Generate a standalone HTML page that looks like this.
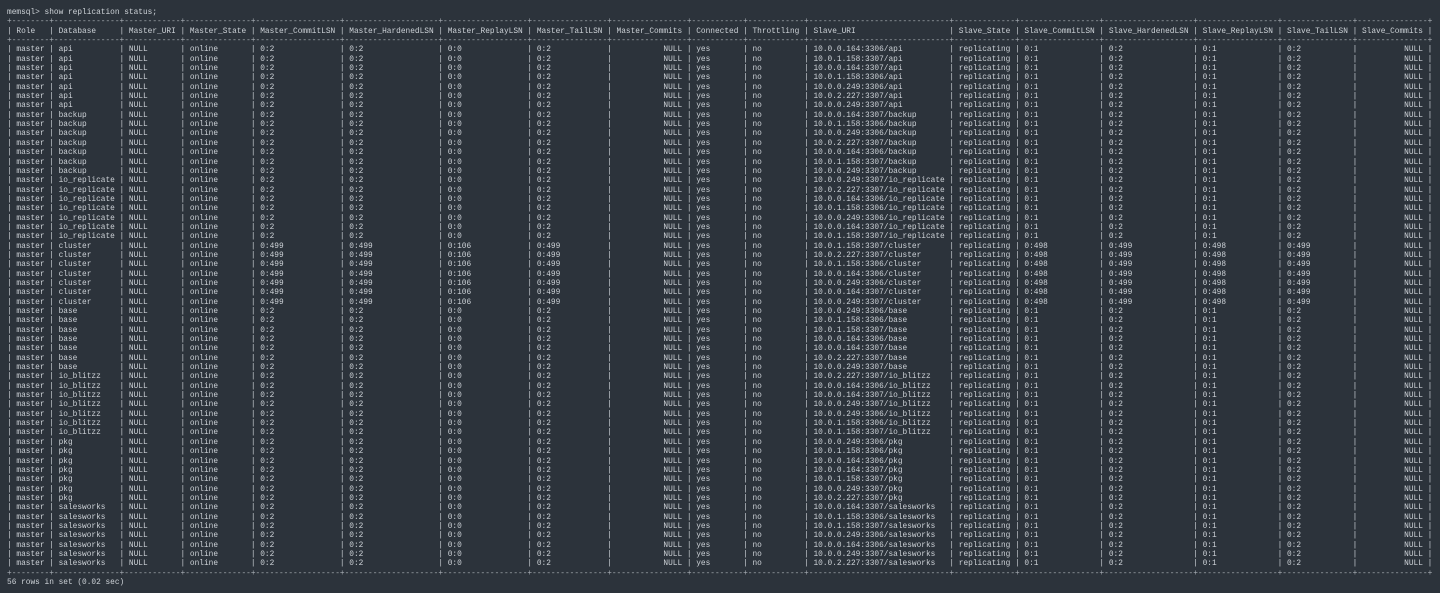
<!DOCTYPE html>
<html><head><meta charset="utf-8"><style>
html,body{margin:0;padding:0;background:#2c333b;width:1440px;height:593px;overflow:hidden}
#t{position:absolute;left:7px;top:8px;font-family:"Liberation Mono",monospace;font-size:7.82px;line-height:9.35px;color:#cdd2d7;white-space:normal}
p{margin:0;height:9.35px;white-space:pre;overflow:hidden}
p i{font-style:normal;display:inline-block;overflow:hidden;white-space:pre;vertical-align:top;box-sizing:border-box;padding:0 1ch;height:9.35px}
p.b i{padding:0;color:#aab0b6}
p.b{color:#aab0b6}
p i:nth-of-type(1){width:8ch}p i:nth-of-type(2){width:14ch}p i:nth-of-type(3){width:12ch}p i:nth-of-type(4){width:14ch}
p i:nth-of-type(5){width:18ch}p i:nth-of-type(6){width:20ch}p i:nth-of-type(7){width:18ch}p i:nth-of-type(8){width:16ch}
p i:nth-of-type(9){width:16ch;text-align:right}p i:nth-of-type(10){width:11ch}p i:nth-of-type(11){width:12ch}p i:nth-of-type(12){width:30ch}
p i:nth-of-type(13){width:13ch}p i:nth-of-type(14){width:17ch}p i:nth-of-type(15){width:19ch}p i:nth-of-type(16){width:17ch}
p i:nth-of-type(17){width:15ch}p i:nth-of-type(18){width:15ch;text-align:right}
p.h i:nth-of-type(9),p.h i:nth-of-type(18){text-align:left}
</style></head><body><div id="t">
<p>memsql&gt; show replication status;</p>
<p class="b">+<i>------------------------------</i>+<i>------------------------------</i>+<i>------------------------------</i>+<i>------------------------------</i>+<i>------------------------------</i>+<i>------------------------------</i>+<i>------------------------------</i>+<i>------------------------------</i>+<i>------------------------------</i>+<i>------------------------------</i>+<i>------------------------------</i>+<i>------------------------------</i>+<i>------------------------------</i>+<i>------------------------------</i>+<i>------------------------------</i>+<i>------------------------------</i>+<i>------------------------------</i>+<i>------------------------------</i>+</p>
<p class="h">|<i>Role</i>|<i>Database</i>|<i>Master_URI</i>|<i>Master_State</i>|<i>Master_CommitLSN</i>|<i>Master_HardenedLSN</i>|<i>Master_ReplayLSN</i>|<i>Master_TailLSN</i>|<i>Master_Commits</i>|<i>Connected</i>|<i>Throttling</i>|<i>Slave_URI</i>|<i>Slave_State</i>|<i>Slave_CommitLSN</i>|<i>Slave_HardenedLSN</i>|<i>Slave_ReplayLSN</i>|<i>Slave_TailLSN</i>|<i>Slave_Commits</i>|</p>
<p class="b">+<i>------------------------------</i>+<i>------------------------------</i>+<i>------------------------------</i>+<i>------------------------------</i>+<i>------------------------------</i>+<i>------------------------------</i>+<i>------------------------------</i>+<i>------------------------------</i>+<i>------------------------------</i>+<i>------------------------------</i>+<i>------------------------------</i>+<i>------------------------------</i>+<i>------------------------------</i>+<i>------------------------------</i>+<i>------------------------------</i>+<i>------------------------------</i>+<i>------------------------------</i>+<i>------------------------------</i>+</p>
<p>|<i>master</i>|<i>api</i>|<i>NULL</i>|<i>online</i>|<i>0:2</i>|<i>0:2</i>|<i>0:0</i>|<i>0:2</i>|<i>NULL</i>|<i>yes</i>|<i>no</i>|<i>10.0.0.164:3306/api</i>|<i>replicating</i>|<i>0:1</i>|<i>0:2</i>|<i>0:1</i>|<i>0:2</i>|<i>NULL</i>|</p>
<p>|<i>master</i>|<i>api</i>|<i>NULL</i>|<i>online</i>|<i>0:2</i>|<i>0:2</i>|<i>0:0</i>|<i>0:2</i>|<i>NULL</i>|<i>yes</i>|<i>no</i>|<i>10.0.1.158:3307/api</i>|<i>replicating</i>|<i>0:1</i>|<i>0:2</i>|<i>0:1</i>|<i>0:2</i>|<i>NULL</i>|</p>
<p>|<i>master</i>|<i>api</i>|<i>NULL</i>|<i>online</i>|<i>0:2</i>|<i>0:2</i>|<i>0:0</i>|<i>0:2</i>|<i>NULL</i>|<i>yes</i>|<i>no</i>|<i>10.0.0.164:3307/api</i>|<i>replicating</i>|<i>0:1</i>|<i>0:2</i>|<i>0:1</i>|<i>0:2</i>|<i>NULL</i>|</p>
<p>|<i>master</i>|<i>api</i>|<i>NULL</i>|<i>online</i>|<i>0:2</i>|<i>0:2</i>|<i>0:0</i>|<i>0:2</i>|<i>NULL</i>|<i>yes</i>|<i>no</i>|<i>10.0.1.158:3306/api</i>|<i>replicating</i>|<i>0:1</i>|<i>0:2</i>|<i>0:1</i>|<i>0:2</i>|<i>NULL</i>|</p>
<p>|<i>master</i>|<i>api</i>|<i>NULL</i>|<i>online</i>|<i>0:2</i>|<i>0:2</i>|<i>0:0</i>|<i>0:2</i>|<i>NULL</i>|<i>yes</i>|<i>no</i>|<i>10.0.0.249:3306/api</i>|<i>replicating</i>|<i>0:1</i>|<i>0:2</i>|<i>0:1</i>|<i>0:2</i>|<i>NULL</i>|</p>
<p>|<i>master</i>|<i>api</i>|<i>NULL</i>|<i>online</i>|<i>0:2</i>|<i>0:2</i>|<i>0:0</i>|<i>0:2</i>|<i>NULL</i>|<i>yes</i>|<i>no</i>|<i>10.0.2.227:3307/api</i>|<i>replicating</i>|<i>0:1</i>|<i>0:2</i>|<i>0:1</i>|<i>0:2</i>|<i>NULL</i>|</p>
<p>|<i>master</i>|<i>api</i>|<i>NULL</i>|<i>online</i>|<i>0:2</i>|<i>0:2</i>|<i>0:0</i>|<i>0:2</i>|<i>NULL</i>|<i>yes</i>|<i>no</i>|<i>10.0.0.249:3307/api</i>|<i>replicating</i>|<i>0:1</i>|<i>0:2</i>|<i>0:1</i>|<i>0:2</i>|<i>NULL</i>|</p>
<p>|<i>master</i>|<i>backup</i>|<i>NULL</i>|<i>online</i>|<i>0:2</i>|<i>0:2</i>|<i>0:0</i>|<i>0:2</i>|<i>NULL</i>|<i>yes</i>|<i>no</i>|<i>10.0.0.164:3307/backup</i>|<i>replicating</i>|<i>0:1</i>|<i>0:2</i>|<i>0:1</i>|<i>0:2</i>|<i>NULL</i>|</p>
<p>|<i>master</i>|<i>backup</i>|<i>NULL</i>|<i>online</i>|<i>0:2</i>|<i>0:2</i>|<i>0:0</i>|<i>0:2</i>|<i>NULL</i>|<i>yes</i>|<i>no</i>|<i>10.0.1.158:3306/backup</i>|<i>replicating</i>|<i>0:1</i>|<i>0:2</i>|<i>0:1</i>|<i>0:2</i>|<i>NULL</i>|</p>
<p>|<i>master</i>|<i>backup</i>|<i>NULL</i>|<i>online</i>|<i>0:2</i>|<i>0:2</i>|<i>0:0</i>|<i>0:2</i>|<i>NULL</i>|<i>yes</i>|<i>no</i>|<i>10.0.0.249:3306/backup</i>|<i>replicating</i>|<i>0:1</i>|<i>0:2</i>|<i>0:1</i>|<i>0:2</i>|<i>NULL</i>|</p>
<p>|<i>master</i>|<i>backup</i>|<i>NULL</i>|<i>online</i>|<i>0:2</i>|<i>0:2</i>|<i>0:0</i>|<i>0:2</i>|<i>NULL</i>|<i>yes</i>|<i>no</i>|<i>10.0.2.227:3307/backup</i>|<i>replicating</i>|<i>0:1</i>|<i>0:2</i>|<i>0:1</i>|<i>0:2</i>|<i>NULL</i>|</p>
<p>|<i>master</i>|<i>backup</i>|<i>NULL</i>|<i>online</i>|<i>0:2</i>|<i>0:2</i>|<i>0:0</i>|<i>0:2</i>|<i>NULL</i>|<i>yes</i>|<i>no</i>|<i>10.0.0.164:3306/backup</i>|<i>replicating</i>|<i>0:1</i>|<i>0:2</i>|<i>0:1</i>|<i>0:2</i>|<i>NULL</i>|</p>
<p>|<i>master</i>|<i>backup</i>|<i>NULL</i>|<i>online</i>|<i>0:2</i>|<i>0:2</i>|<i>0:0</i>|<i>0:2</i>|<i>NULL</i>|<i>yes</i>|<i>no</i>|<i>10.0.1.158:3307/backup</i>|<i>replicating</i>|<i>0:1</i>|<i>0:2</i>|<i>0:1</i>|<i>0:2</i>|<i>NULL</i>|</p>
<p>|<i>master</i>|<i>backup</i>|<i>NULL</i>|<i>online</i>|<i>0:2</i>|<i>0:2</i>|<i>0:0</i>|<i>0:2</i>|<i>NULL</i>|<i>yes</i>|<i>no</i>|<i>10.0.0.249:3307/backup</i>|<i>replicating</i>|<i>0:1</i>|<i>0:2</i>|<i>0:1</i>|<i>0:2</i>|<i>NULL</i>|</p>
<p>|<i>master</i>|<i>io_replicate</i>|<i>NULL</i>|<i>online</i>|<i>0:2</i>|<i>0:2</i>|<i>0:0</i>|<i>0:2</i>|<i>NULL</i>|<i>yes</i>|<i>no</i>|<i>10.0.0.249:3307/io_replicate</i>|<i>replicating</i>|<i>0:1</i>|<i>0:2</i>|<i>0:1</i>|<i>0:2</i>|<i>NULL</i>|</p>
<p>|<i>master</i>|<i>io_replicate</i>|<i>NULL</i>|<i>online</i>|<i>0:2</i>|<i>0:2</i>|<i>0:0</i>|<i>0:2</i>|<i>NULL</i>|<i>yes</i>|<i>no</i>|<i>10.0.2.227:3307/io_replicate</i>|<i>replicating</i>|<i>0:1</i>|<i>0:2</i>|<i>0:1</i>|<i>0:2</i>|<i>NULL</i>|</p>
<p>|<i>master</i>|<i>io_replicate</i>|<i>NULL</i>|<i>online</i>|<i>0:2</i>|<i>0:2</i>|<i>0:0</i>|<i>0:2</i>|<i>NULL</i>|<i>yes</i>|<i>no</i>|<i>10.0.0.164:3306/io_replicate</i>|<i>replicating</i>|<i>0:1</i>|<i>0:2</i>|<i>0:1</i>|<i>0:2</i>|<i>NULL</i>|</p>
<p>|<i>master</i>|<i>io_replicate</i>|<i>NULL</i>|<i>online</i>|<i>0:2</i>|<i>0:2</i>|<i>0:0</i>|<i>0:2</i>|<i>NULL</i>|<i>yes</i>|<i>no</i>|<i>10.0.1.158:3306/io_replicate</i>|<i>replicating</i>|<i>0:1</i>|<i>0:2</i>|<i>0:1</i>|<i>0:2</i>|<i>NULL</i>|</p>
<p>|<i>master</i>|<i>io_replicate</i>|<i>NULL</i>|<i>online</i>|<i>0:2</i>|<i>0:2</i>|<i>0:0</i>|<i>0:2</i>|<i>NULL</i>|<i>yes</i>|<i>no</i>|<i>10.0.0.249:3306/io_replicate</i>|<i>replicating</i>|<i>0:1</i>|<i>0:2</i>|<i>0:1</i>|<i>0:2</i>|<i>NULL</i>|</p>
<p>|<i>master</i>|<i>io_replicate</i>|<i>NULL</i>|<i>online</i>|<i>0:2</i>|<i>0:2</i>|<i>0:0</i>|<i>0:2</i>|<i>NULL</i>|<i>yes</i>|<i>no</i>|<i>10.0.0.164:3307/io_replicate</i>|<i>replicating</i>|<i>0:1</i>|<i>0:2</i>|<i>0:1</i>|<i>0:2</i>|<i>NULL</i>|</p>
<p>|<i>master</i>|<i>io_replicate</i>|<i>NULL</i>|<i>online</i>|<i>0:2</i>|<i>0:2</i>|<i>0:0</i>|<i>0:2</i>|<i>NULL</i>|<i>yes</i>|<i>no</i>|<i>10.0.1.158:3307/io_replicate</i>|<i>replicating</i>|<i>0:1</i>|<i>0:2</i>|<i>0:1</i>|<i>0:2</i>|<i>NULL</i>|</p>
<p>|<i>master</i>|<i>cluster</i>|<i>NULL</i>|<i>online</i>|<i>0:499</i>|<i>0:499</i>|<i>0:106</i>|<i>0:499</i>|<i>NULL</i>|<i>yes</i>|<i>no</i>|<i>10.0.1.158:3307/cluster</i>|<i>replicating</i>|<i>0:498</i>|<i>0:499</i>|<i>0:498</i>|<i>0:499</i>|<i>NULL</i>|</p>
<p>|<i>master</i>|<i>cluster</i>|<i>NULL</i>|<i>online</i>|<i>0:499</i>|<i>0:499</i>|<i>0:106</i>|<i>0:499</i>|<i>NULL</i>|<i>yes</i>|<i>no</i>|<i>10.0.2.227:3307/cluster</i>|<i>replicating</i>|<i>0:498</i>|<i>0:499</i>|<i>0:498</i>|<i>0:499</i>|<i>NULL</i>|</p>
<p>|<i>master</i>|<i>cluster</i>|<i>NULL</i>|<i>online</i>|<i>0:499</i>|<i>0:499</i>|<i>0:106</i>|<i>0:499</i>|<i>NULL</i>|<i>yes</i>|<i>no</i>|<i>10.0.1.158:3306/cluster</i>|<i>replicating</i>|<i>0:498</i>|<i>0:499</i>|<i>0:498</i>|<i>0:499</i>|<i>NULL</i>|</p>
<p>|<i>master</i>|<i>cluster</i>|<i>NULL</i>|<i>online</i>|<i>0:499</i>|<i>0:499</i>|<i>0:106</i>|<i>0:499</i>|<i>NULL</i>|<i>yes</i>|<i>no</i>|<i>10.0.0.164:3306/cluster</i>|<i>replicating</i>|<i>0:498</i>|<i>0:499</i>|<i>0:498</i>|<i>0:499</i>|<i>NULL</i>|</p>
<p>|<i>master</i>|<i>cluster</i>|<i>NULL</i>|<i>online</i>|<i>0:499</i>|<i>0:499</i>|<i>0:106</i>|<i>0:499</i>|<i>NULL</i>|<i>yes</i>|<i>no</i>|<i>10.0.0.249:3306/cluster</i>|<i>replicating</i>|<i>0:498</i>|<i>0:499</i>|<i>0:498</i>|<i>0:499</i>|<i>NULL</i>|</p>
<p>|<i>master</i>|<i>cluster</i>|<i>NULL</i>|<i>online</i>|<i>0:499</i>|<i>0:499</i>|<i>0:106</i>|<i>0:499</i>|<i>NULL</i>|<i>yes</i>|<i>no</i>|<i>10.0.0.164:3307/cluster</i>|<i>replicating</i>|<i>0:498</i>|<i>0:499</i>|<i>0:498</i>|<i>0:499</i>|<i>NULL</i>|</p>
<p>|<i>master</i>|<i>cluster</i>|<i>NULL</i>|<i>online</i>|<i>0:499</i>|<i>0:499</i>|<i>0:106</i>|<i>0:499</i>|<i>NULL</i>|<i>yes</i>|<i>no</i>|<i>10.0.0.249:3307/cluster</i>|<i>replicating</i>|<i>0:498</i>|<i>0:499</i>|<i>0:498</i>|<i>0:499</i>|<i>NULL</i>|</p>
<p>|<i>master</i>|<i>base</i>|<i>NULL</i>|<i>online</i>|<i>0:2</i>|<i>0:2</i>|<i>0:0</i>|<i>0:2</i>|<i>NULL</i>|<i>yes</i>|<i>no</i>|<i>10.0.0.249:3306/base</i>|<i>replicating</i>|<i>0:1</i>|<i>0:2</i>|<i>0:1</i>|<i>0:2</i>|<i>NULL</i>|</p>
<p>|<i>master</i>|<i>base</i>|<i>NULL</i>|<i>online</i>|<i>0:2</i>|<i>0:2</i>|<i>0:0</i>|<i>0:2</i>|<i>NULL</i>|<i>yes</i>|<i>no</i>|<i>10.0.1.158:3306/base</i>|<i>replicating</i>|<i>0:1</i>|<i>0:2</i>|<i>0:1</i>|<i>0:2</i>|<i>NULL</i>|</p>
<p>|<i>master</i>|<i>base</i>|<i>NULL</i>|<i>online</i>|<i>0:2</i>|<i>0:2</i>|<i>0:0</i>|<i>0:2</i>|<i>NULL</i>|<i>yes</i>|<i>no</i>|<i>10.0.1.158:3307/base</i>|<i>replicating</i>|<i>0:1</i>|<i>0:2</i>|<i>0:1</i>|<i>0:2</i>|<i>NULL</i>|</p>
<p>|<i>master</i>|<i>base</i>|<i>NULL</i>|<i>online</i>|<i>0:2</i>|<i>0:2</i>|<i>0:0</i>|<i>0:2</i>|<i>NULL</i>|<i>yes</i>|<i>no</i>|<i>10.0.0.164:3306/base</i>|<i>replicating</i>|<i>0:1</i>|<i>0:2</i>|<i>0:1</i>|<i>0:2</i>|<i>NULL</i>|</p>
<p>|<i>master</i>|<i>base</i>|<i>NULL</i>|<i>online</i>|<i>0:2</i>|<i>0:2</i>|<i>0:0</i>|<i>0:2</i>|<i>NULL</i>|<i>yes</i>|<i>no</i>|<i>10.0.0.164:3307/base</i>|<i>replicating</i>|<i>0:1</i>|<i>0:2</i>|<i>0:1</i>|<i>0:2</i>|<i>NULL</i>|</p>
<p>|<i>master</i>|<i>base</i>|<i>NULL</i>|<i>online</i>|<i>0:2</i>|<i>0:2</i>|<i>0:0</i>|<i>0:2</i>|<i>NULL</i>|<i>yes</i>|<i>no</i>|<i>10.0.2.227:3307/base</i>|<i>replicating</i>|<i>0:1</i>|<i>0:2</i>|<i>0:1</i>|<i>0:2</i>|<i>NULL</i>|</p>
<p>|<i>master</i>|<i>base</i>|<i>NULL</i>|<i>online</i>|<i>0:2</i>|<i>0:2</i>|<i>0:0</i>|<i>0:2</i>|<i>NULL</i>|<i>yes</i>|<i>no</i>|<i>10.0.0.249:3307/base</i>|<i>replicating</i>|<i>0:1</i>|<i>0:2</i>|<i>0:1</i>|<i>0:2</i>|<i>NULL</i>|</p>
<p>|<i>master</i>|<i>io_blitzz</i>|<i>NULL</i>|<i>online</i>|<i>0:2</i>|<i>0:2</i>|<i>0:0</i>|<i>0:2</i>|<i>NULL</i>|<i>yes</i>|<i>no</i>|<i>10.0.2.227:3307/io_blitzz</i>|<i>replicating</i>|<i>0:1</i>|<i>0:2</i>|<i>0:1</i>|<i>0:2</i>|<i>NULL</i>|</p>
<p>|<i>master</i>|<i>io_blitzz</i>|<i>NULL</i>|<i>online</i>|<i>0:2</i>|<i>0:2</i>|<i>0:0</i>|<i>0:2</i>|<i>NULL</i>|<i>yes</i>|<i>no</i>|<i>10.0.0.164:3306/io_blitzz</i>|<i>replicating</i>|<i>0:1</i>|<i>0:2</i>|<i>0:1</i>|<i>0:2</i>|<i>NULL</i>|</p>
<p>|<i>master</i>|<i>io_blitzz</i>|<i>NULL</i>|<i>online</i>|<i>0:2</i>|<i>0:2</i>|<i>0:0</i>|<i>0:2</i>|<i>NULL</i>|<i>yes</i>|<i>no</i>|<i>10.0.0.164:3307/io_blitzz</i>|<i>replicating</i>|<i>0:1</i>|<i>0:2</i>|<i>0:1</i>|<i>0:2</i>|<i>NULL</i>|</p>
<p>|<i>master</i>|<i>io_blitzz</i>|<i>NULL</i>|<i>online</i>|<i>0:2</i>|<i>0:2</i>|<i>0:0</i>|<i>0:2</i>|<i>NULL</i>|<i>yes</i>|<i>no</i>|<i>10.0.0.249:3307/io_blitzz</i>|<i>replicating</i>|<i>0:1</i>|<i>0:2</i>|<i>0:1</i>|<i>0:2</i>|<i>NULL</i>|</p>
<p>|<i>master</i>|<i>io_blitzz</i>|<i>NULL</i>|<i>online</i>|<i>0:2</i>|<i>0:2</i>|<i>0:0</i>|<i>0:2</i>|<i>NULL</i>|<i>yes</i>|<i>no</i>|<i>10.0.0.249:3306/io_blitzz</i>|<i>replicating</i>|<i>0:1</i>|<i>0:2</i>|<i>0:1</i>|<i>0:2</i>|<i>NULL</i>|</p>
<p>|<i>master</i>|<i>io_blitzz</i>|<i>NULL</i>|<i>online</i>|<i>0:2</i>|<i>0:2</i>|<i>0:0</i>|<i>0:2</i>|<i>NULL</i>|<i>yes</i>|<i>no</i>|<i>10.0.1.158:3306/io_blitzz</i>|<i>replicating</i>|<i>0:1</i>|<i>0:2</i>|<i>0:1</i>|<i>0:2</i>|<i>NULL</i>|</p>
<p>|<i>master</i>|<i>io_blitzz</i>|<i>NULL</i>|<i>online</i>|<i>0:2</i>|<i>0:2</i>|<i>0:0</i>|<i>0:2</i>|<i>NULL</i>|<i>yes</i>|<i>no</i>|<i>10.0.1.158:3307/io_blitzz</i>|<i>replicating</i>|<i>0:1</i>|<i>0:2</i>|<i>0:1</i>|<i>0:2</i>|<i>NULL</i>|</p>
<p>|<i>master</i>|<i>pkg</i>|<i>NULL</i>|<i>online</i>|<i>0:2</i>|<i>0:2</i>|<i>0:0</i>|<i>0:2</i>|<i>NULL</i>|<i>yes</i>|<i>no</i>|<i>10.0.0.249:3306/pkg</i>|<i>replicating</i>|<i>0:1</i>|<i>0:2</i>|<i>0:1</i>|<i>0:2</i>|<i>NULL</i>|</p>
<p>|<i>master</i>|<i>pkg</i>|<i>NULL</i>|<i>online</i>|<i>0:2</i>|<i>0:2</i>|<i>0:0</i>|<i>0:2</i>|<i>NULL</i>|<i>yes</i>|<i>no</i>|<i>10.0.1.158:3306/pkg</i>|<i>replicating</i>|<i>0:1</i>|<i>0:2</i>|<i>0:1</i>|<i>0:2</i>|<i>NULL</i>|</p>
<p>|<i>master</i>|<i>pkg</i>|<i>NULL</i>|<i>online</i>|<i>0:2</i>|<i>0:2</i>|<i>0:0</i>|<i>0:2</i>|<i>NULL</i>|<i>yes</i>|<i>no</i>|<i>10.0.0.164:3306/pkg</i>|<i>replicating</i>|<i>0:1</i>|<i>0:2</i>|<i>0:1</i>|<i>0:2</i>|<i>NULL</i>|</p>
<p>|<i>master</i>|<i>pkg</i>|<i>NULL</i>|<i>online</i>|<i>0:2</i>|<i>0:2</i>|<i>0:0</i>|<i>0:2</i>|<i>NULL</i>|<i>yes</i>|<i>no</i>|<i>10.0.0.164:3307/pkg</i>|<i>replicating</i>|<i>0:1</i>|<i>0:2</i>|<i>0:1</i>|<i>0:2</i>|<i>NULL</i>|</p>
<p>|<i>master</i>|<i>pkg</i>|<i>NULL</i>|<i>online</i>|<i>0:2</i>|<i>0:2</i>|<i>0:0</i>|<i>0:2</i>|<i>NULL</i>|<i>yes</i>|<i>no</i>|<i>10.0.1.158:3307/pkg</i>|<i>replicating</i>|<i>0:1</i>|<i>0:2</i>|<i>0:1</i>|<i>0:2</i>|<i>NULL</i>|</p>
<p>|<i>master</i>|<i>pkg</i>|<i>NULL</i>|<i>online</i>|<i>0:2</i>|<i>0:2</i>|<i>0:0</i>|<i>0:2</i>|<i>NULL</i>|<i>yes</i>|<i>no</i>|<i>10.0.0.249:3307/pkg</i>|<i>replicating</i>|<i>0:1</i>|<i>0:2</i>|<i>0:1</i>|<i>0:2</i>|<i>NULL</i>|</p>
<p>|<i>master</i>|<i>pkg</i>|<i>NULL</i>|<i>online</i>|<i>0:2</i>|<i>0:2</i>|<i>0:0</i>|<i>0:2</i>|<i>NULL</i>|<i>yes</i>|<i>no</i>|<i>10.0.2.227:3307/pkg</i>|<i>replicating</i>|<i>0:1</i>|<i>0:2</i>|<i>0:1</i>|<i>0:2</i>|<i>NULL</i>|</p>
<p>|<i>master</i>|<i>salesworks</i>|<i>NULL</i>|<i>online</i>|<i>0:2</i>|<i>0:2</i>|<i>0:0</i>|<i>0:2</i>|<i>NULL</i>|<i>yes</i>|<i>no</i>|<i>10.0.0.164:3307/salesworks</i>|<i>replicating</i>|<i>0:1</i>|<i>0:2</i>|<i>0:1</i>|<i>0:2</i>|<i>NULL</i>|</p>
<p>|<i>master</i>|<i>salesworks</i>|<i>NULL</i>|<i>online</i>|<i>0:2</i>|<i>0:2</i>|<i>0:0</i>|<i>0:2</i>|<i>NULL</i>|<i>yes</i>|<i>no</i>|<i>10.0.1.158:3306/salesworks</i>|<i>replicating</i>|<i>0:1</i>|<i>0:2</i>|<i>0:1</i>|<i>0:2</i>|<i>NULL</i>|</p>
<p>|<i>master</i>|<i>salesworks</i>|<i>NULL</i>|<i>online</i>|<i>0:2</i>|<i>0:2</i>|<i>0:0</i>|<i>0:2</i>|<i>NULL</i>|<i>yes</i>|<i>no</i>|<i>10.0.1.158:3307/salesworks</i>|<i>replicating</i>|<i>0:1</i>|<i>0:2</i>|<i>0:1</i>|<i>0:2</i>|<i>NULL</i>|</p>
<p>|<i>master</i>|<i>salesworks</i>|<i>NULL</i>|<i>online</i>|<i>0:2</i>|<i>0:2</i>|<i>0:0</i>|<i>0:2</i>|<i>NULL</i>|<i>yes</i>|<i>no</i>|<i>10.0.0.249:3306/salesworks</i>|<i>replicating</i>|<i>0:1</i>|<i>0:2</i>|<i>0:1</i>|<i>0:2</i>|<i>NULL</i>|</p>
<p>|<i>master</i>|<i>salesworks</i>|<i>NULL</i>|<i>online</i>|<i>0:2</i>|<i>0:2</i>|<i>0:0</i>|<i>0:2</i>|<i>NULL</i>|<i>yes</i>|<i>no</i>|<i>10.0.0.164:3306/salesworks</i>|<i>replicating</i>|<i>0:1</i>|<i>0:2</i>|<i>0:1</i>|<i>0:2</i>|<i>NULL</i>|</p>
<p>|<i>master</i>|<i>salesworks</i>|<i>NULL</i>|<i>online</i>|<i>0:2</i>|<i>0:2</i>|<i>0:0</i>|<i>0:2</i>|<i>NULL</i>|<i>yes</i>|<i>no</i>|<i>10.0.0.249:3307/salesworks</i>|<i>replicating</i>|<i>0:1</i>|<i>0:2</i>|<i>0:1</i>|<i>0:2</i>|<i>NULL</i>|</p>
<p>|<i>master</i>|<i>salesworks</i>|<i>NULL</i>|<i>online</i>|<i>0:2</i>|<i>0:2</i>|<i>0:0</i>|<i>0:2</i>|<i>NULL</i>|<i>yes</i>|<i>no</i>|<i>10.0.2.227:3307/salesworks</i>|<i>replicating</i>|<i>0:1</i>|<i>0:2</i>|<i>0:1</i>|<i>0:2</i>|<i>NULL</i>|</p>
<p class="b">+<i>------------------------------</i>+<i>------------------------------</i>+<i>------------------------------</i>+<i>------------------------------</i>+<i>------------------------------</i>+<i>------------------------------</i>+<i>------------------------------</i>+<i>------------------------------</i>+<i>------------------------------</i>+<i>------------------------------</i>+<i>------------------------------</i>+<i>------------------------------</i>+<i>------------------------------</i>+<i>------------------------------</i>+<i>------------------------------</i>+<i>------------------------------</i>+<i>------------------------------</i>+<i>------------------------------</i>+</p>
<p>56 rows in set (0.02 sec)</p>
</div></body></html>
